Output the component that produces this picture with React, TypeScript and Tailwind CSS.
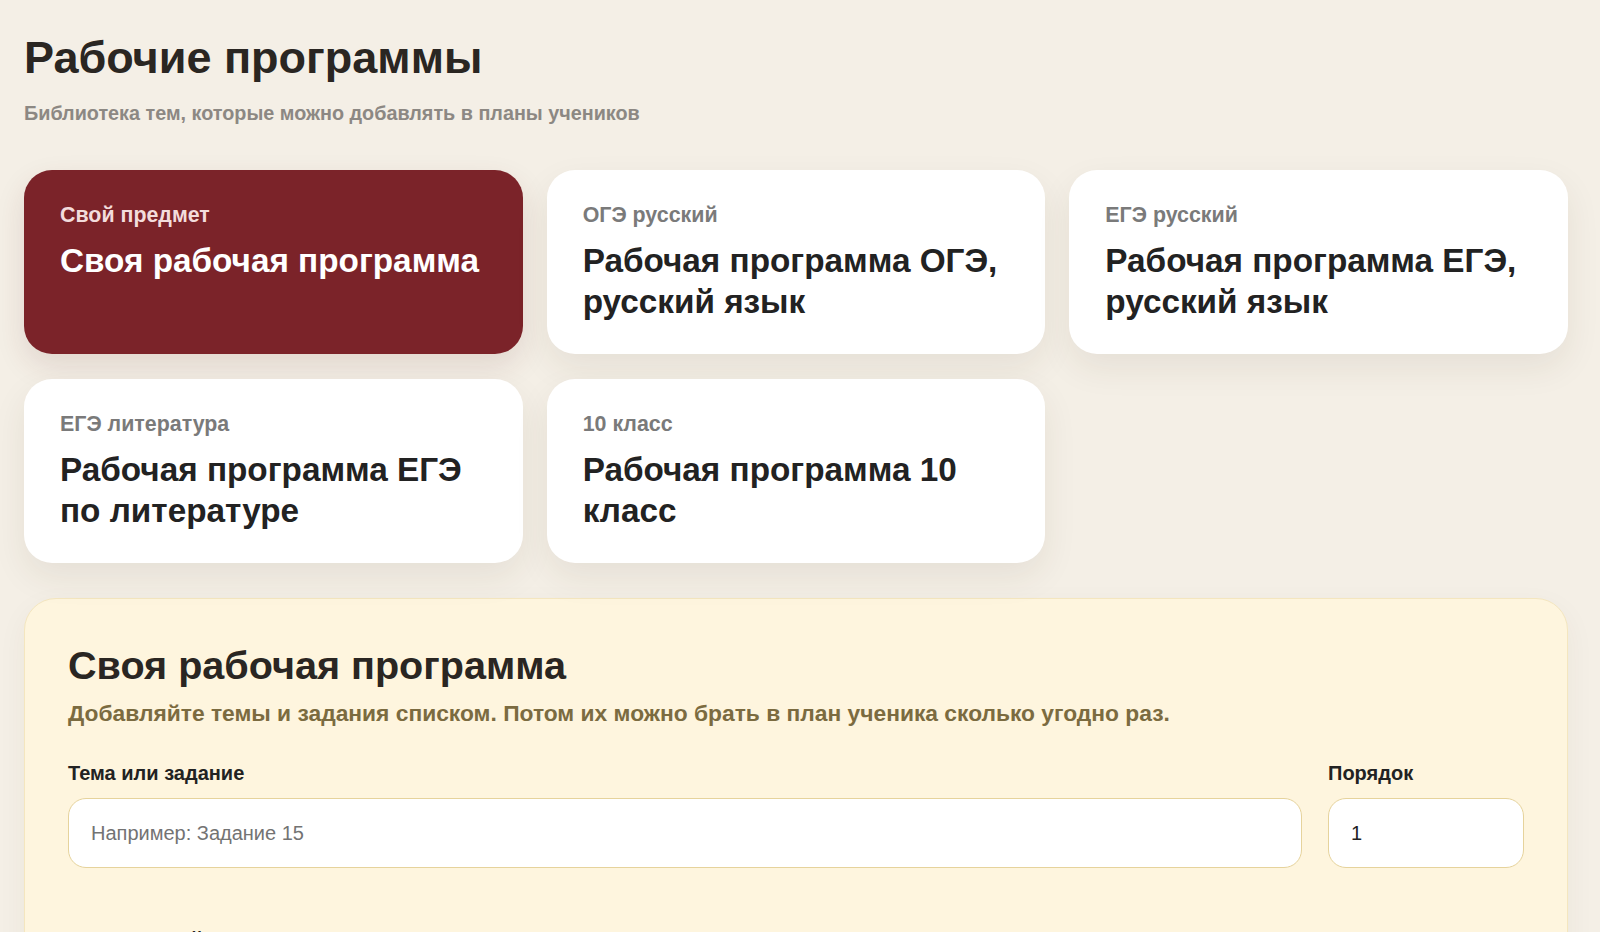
import React from "react";

interface Program {
  tag: string;
  title: string;
  active?: boolean;
}

const programs: Program[] = [
  { tag: "Свой предмет", title: "Своя рабочая программа", active: true },
  { tag: "ОГЭ русский", title: "Рабочая программа ОГЭ, русский язык" },
  { tag: "ЕГЭ русский", title: "Рабочая программа ЕГЭ, русский язык" },
  { tag: "ЕГЭ литература", title: "Рабочая программа ЕГЭ по литературе" },
  { tag: "10 класс", title: "Рабочая программа 10 класс" },
];

function ProgramCard({ tag, title, active }: Program) {
  return (
    <button
      type="button"
      className={
        active
          ? "flex flex-col items-start rounded-[28px] bg-[#7b2329] px-9 pt-[34px] pb-[32px] text-left shadow-[0_12px_30px_rgba(90,30,30,0.12)]"
          : "flex flex-col items-start rounded-[28px] bg-white px-9 pt-[34px] pb-[32px] text-left shadow-[0_14px_34px_rgba(70,50,20,0.08)]"
      }
    >
      <span
        className={
          active
            ? "text-[21.4px] leading-[23px] font-bold text-[#f3dcdc]"
            : "text-[21.4px] leading-[23px] font-bold text-[#7a7a7a]"
        }
      >
        {tag}
      </span>
      <span
        className={
          active
            ? "mt-[13px] text-[33.3px] leading-[41px] font-bold text-white"
            : "mt-[13px] text-[33.3px] leading-[41px] font-bold text-[#222222]"
        }
      >
        {title}
      </span>
    </button>
  );
}

export default function App() {
  return (
    <div className="min-h-screen bg-[#f4efe6] px-6 pt-[32px] pb-10 font-['Liberation_Sans',Arial,sans-serif]">
      <div className="pr-2">
        <h1 className="text-[45px] leading-[52px] font-bold text-[#2a2622]">
          Рабочие программы
        </h1>
        <p className="mt-[17px] text-[19.8px] leading-[24px] font-bold text-[#8c8883]">
          Библиотека тем, которые можно добавлять в планы учеников
        </p>

        <div className="mt-[45px] grid grid-cols-3 gap-x-6 gap-y-[25px]">
          {programs.map((p) => (
            <ProgramCard key={p.tag} {...p} />
          ))}
        </div>

        <section className="mt-[35px] rounded-[32px] border border-[#f4e6bf] bg-[#fef5de] px-[43px] pt-[43px] pb-10 shadow-[0_10px_30px_rgba(70,50,20,0.05)]">
          <h2 className="text-[39.6px] leading-[46px] font-bold text-[#2a2622]">
            Своя рабочая программа
          </h2>
          <p className="mt-[13px] text-[22.8px] leading-[24px] font-bold text-[#7b6b40]">
            Добавляйте темы и задания списком. Потом их можно брать в план
            ученика сколько угодно раз.
          </p>

          <div className="mt-[37px] grid grid-cols-[1fr_196px] gap-x-[26px]">
            <label className="flex flex-col">
              <span className="text-[20px] leading-[22px] font-bold text-[#222222]">
                Тема или задание
              </span>
              <input
                type="text"
                placeholder="Например: Задание 15"
                className="mt-[14px] h-[70px] rounded-[18px] border-[1.5px] border-[#e6d39c] bg-white px-[22px] text-[20px] text-[#222222] placeholder:text-[#737373] outline-none"
              />
            </label>
            <label className="flex flex-col">
              <span className="text-[20px] leading-[22px] font-bold text-[#222222]">
                Порядок
              </span>
              <input
                type="text"
                defaultValue="1"
                className="mt-[14px] h-[70px] rounded-[18px] border-[1.5px] border-[#e6d39c] bg-white px-[22px] text-[20px] text-[#222222] outline-none"
              />
            </label>
          </div>

          <div className="mt-[60px] flex flex-col">
            <span className="text-[20px] leading-[22px] font-bold text-[#222222]">
              Комментарий
            </span>
            <textarea className="mt-4 h-[120px] rounded-[18px] border-[1.5px] border-[#e6d39c] bg-white px-[22px] py-4 text-[20px] outline-none" />
          </div>
        </section>
      </div>
    </div>
  );
}
